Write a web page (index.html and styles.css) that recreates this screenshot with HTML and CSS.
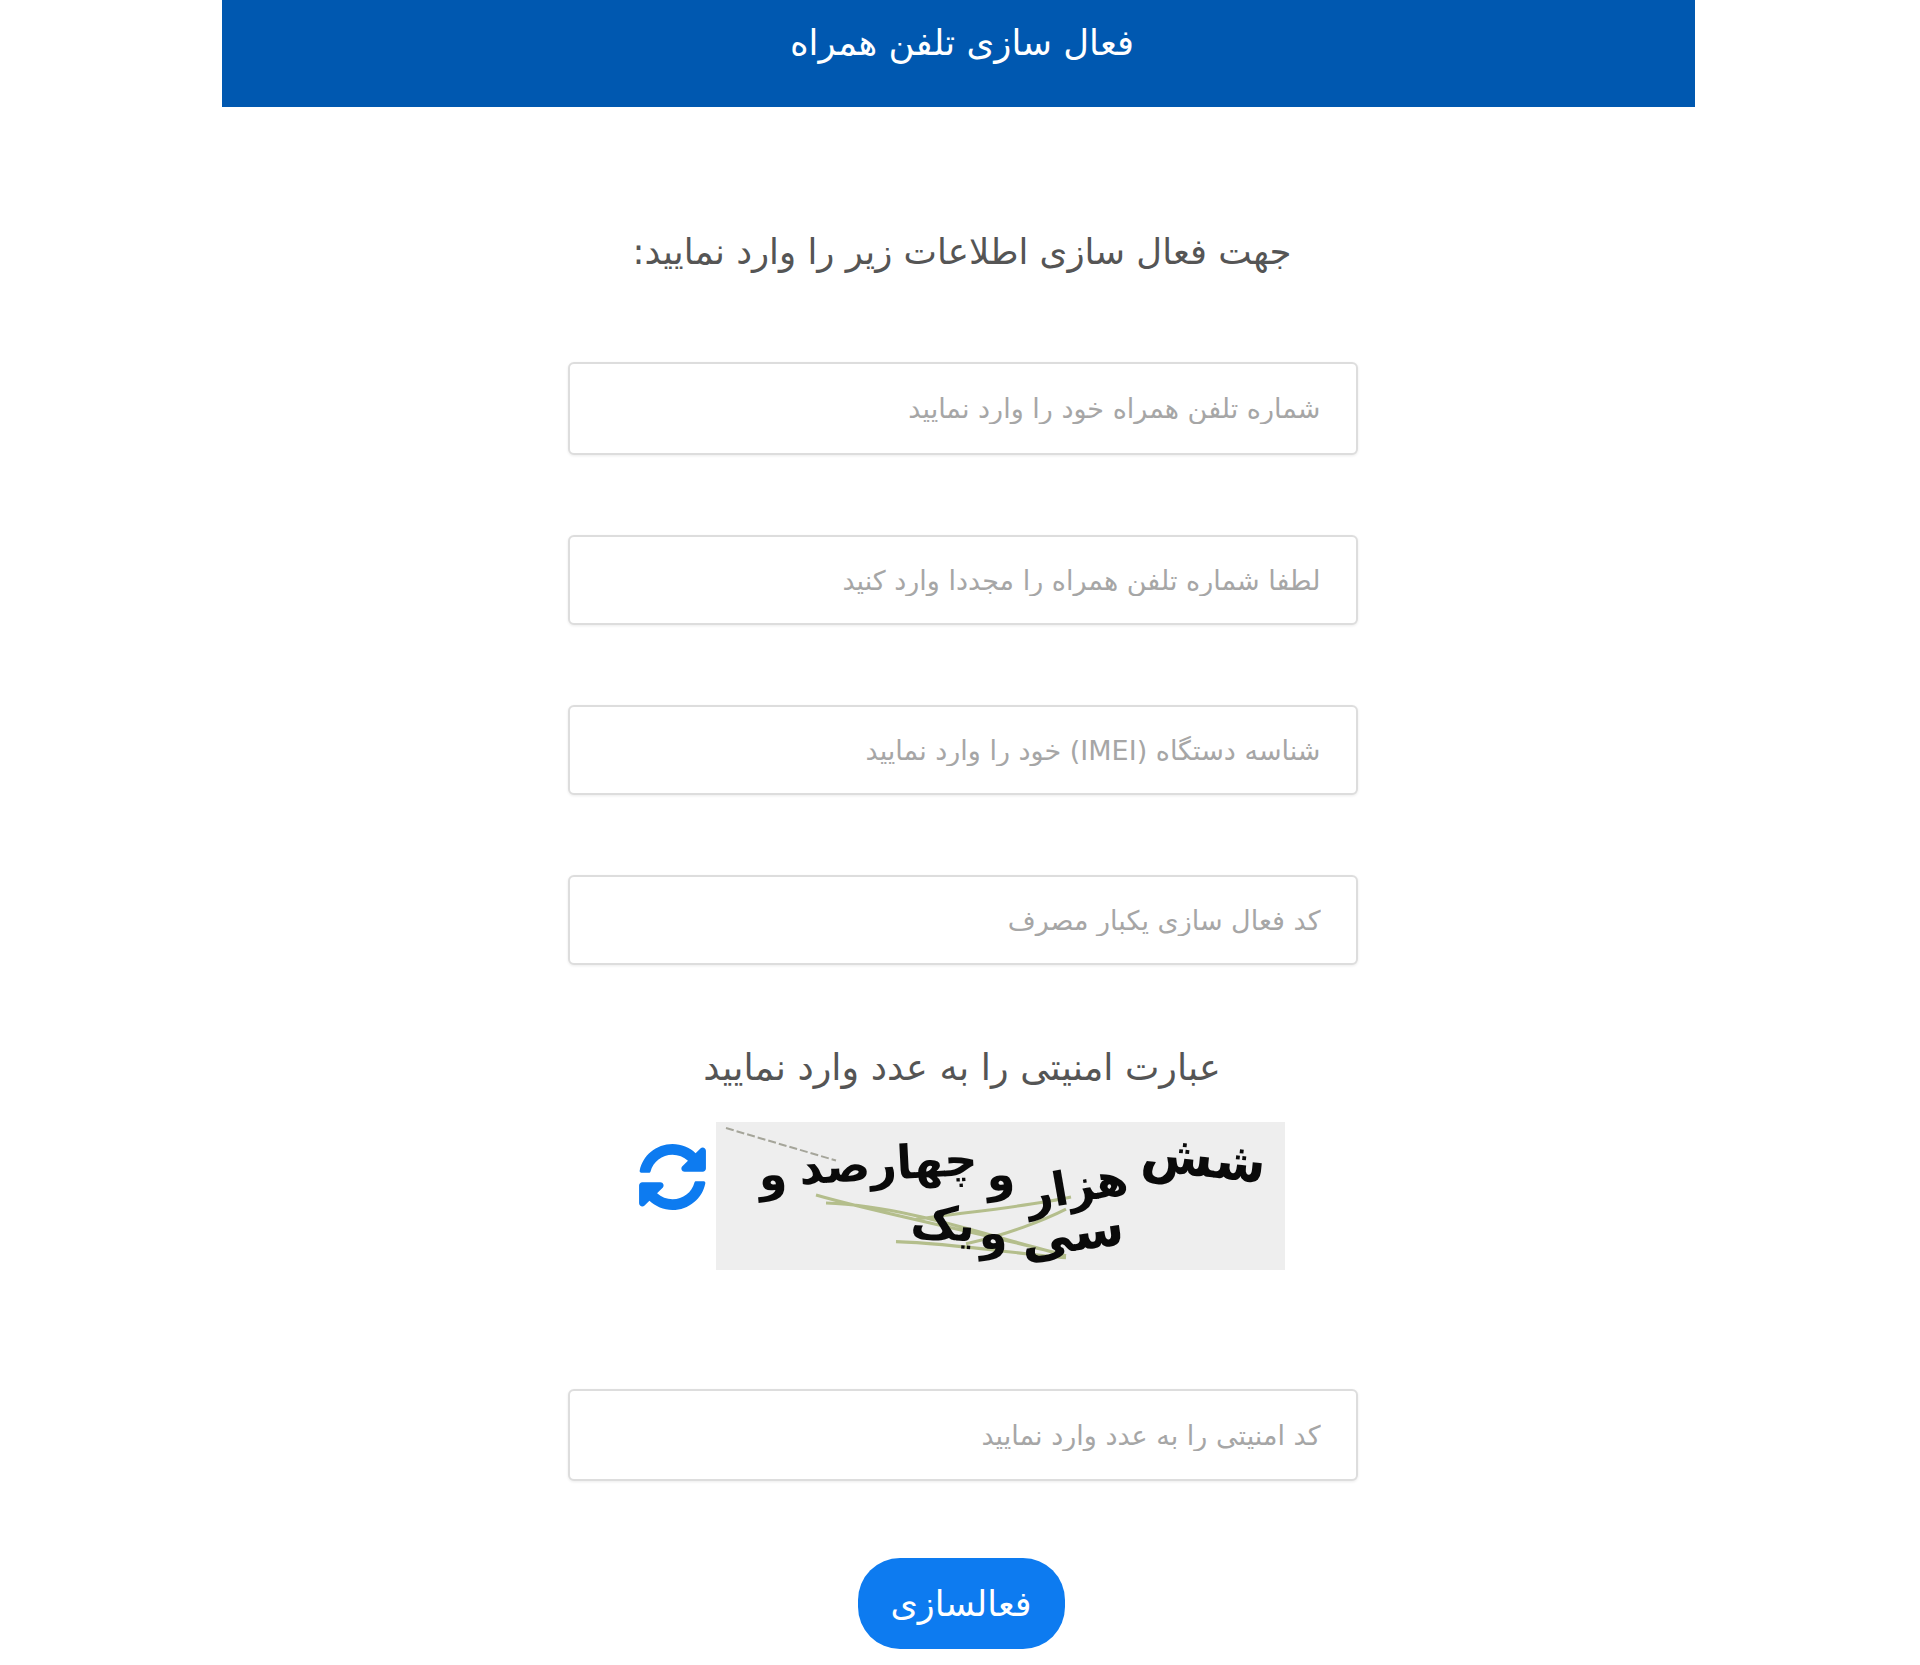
FILE: index.html
```html
<!DOCTYPE html>
<html lang="fa" dir="rtl">
<head>
<meta charset="utf-8">
<title>فعال سازی تلفن همراه</title>
<link rel="stylesheet" href="styles.css">
</head>
<body>
<main class="page">
  <header class="banner"><h1 class="banner-title">فعال سازی تلفن همراه</h1></header>
  <form class="form">
    <p class="intro">جهت فعال سازی اطلاعات زیر را وارد نمایید:</p>
    <input class="field field-first" type="text" placeholder="شماره تلفن همراه خود را وارد نمایید">
    <input class="field" type="text" placeholder="لطفا شماره تلفن همراه را مجددا وارد کنید">
    <input class="field" type="text" placeholder="شناسه دستگاه (IMEI) خود را وارد نمایید">
    <input class="field" type="text" placeholder="کد فعال سازی یکبار مصرف">
    <p class="captcha-label">عبارت امنیتی را به عدد وارد نمایید</p>
    <div class="captcha">
      <svg class="captcha-image" viewBox="0 0 569 146" preserveAspectRatio="none">
        <rect class="captcha-bg" width="569" height="146"/>
        <path class="noise-thin" d="M10 6 L120 38"/>
        <path class="noise" d="M100 72 C170 92 280 112 350 132 M110 80 C190 82 290 118 345 130 M180 118 C240 120 300 130 350 134 M200 96 C260 88 320 82 355 74 M250 120 C290 112 330 96 350 86"/>
        <text class="captcha-word captcha-large" transform="translate(548 60) rotate(6)">شش</text>
        <text class="captcha-word" transform="translate(414 70) rotate(-10)">هزار</text>
        <text class="captcha-word" transform="translate(300 66) rotate(-6)">و</text>
        <text class="captcha-word" transform="translate(262 52) rotate(-3)">چهارصد</text>
        <text class="captcha-word" transform="translate(72 66) rotate(-5)">و</text>
        <text class="captcha-word captcha-large" transform="translate(410 120) rotate(-8)">سی</text>
        <text class="captcha-word" transform="translate(292 124) rotate(-5)">و</text>
        <text class="captcha-word" transform="translate(258 118) rotate(4)">یک</text>
      </svg>
      <svg class="refresh" viewBox="0 0 512 512" preserveAspectRatio="none">
        <path d="M370.72 133.28C339.458 104.008 298.888 87.962 255.848 88c-77.458.068-144.328 53.178-162.791 126.85-1.344 5.363-6.122 9.15-11.651 9.15H24.103c-7.498 0-13.194-6.807-11.807-14.176C33.933 94.924 134.813 8 256 8c66.448 0 126.791 26.136 171.315 68.685L463.03 40.97C478.149 25.851 504 36.559 504 57.941V192c0 13.255-10.745 24-24 24H345.941c-21.382 0-32.09-25.851-16.971-40.971l41.75-41.749zM32 296h134.059c21.382 0 32.09 25.851 16.971 40.971l-41.75 41.75c31.262 29.273 71.835 45.319 114.876 45.28 77.418-.07 144.315-53.144 162.787-126.849 1.344-5.363 6.122-9.15 11.651-9.15h57.304c7.498 0 13.194 6.807 11.807 14.176C478.067 417.076 377.187 504 256 504c-66.448 0-126.791-26.136-171.315-68.685L48.97 471.03C33.851 486.149 8 475.441 8 454.059V320c0-13.255 10.745-24 24-24z"/>
      </svg>
    </div>
    <input class="field field-code" type="text" placeholder="کد امنیتی را به عدد وارد نمایید">
    <button class="submit" type="button">فعالسازی</button>
  </form>
</main>
</body>
</html>
```
FILE: styles.css
```css
* { box-sizing: border-box; }
html, body { margin: 0; padding: 0; background: #fff; }
body { font-family: "DejaVu Sans", "Noto Sans", sans-serif; height: 1665px; overflow: hidden; }
.page { margin: 0 225px 0 222px; }
.banner { height: 107px; background: #0058b0; display: flex; justify-content: center; padding: 22px 0 0 7px; }
.banner-title { margin: 0; color: #fff; font-size: 35.5px; font-weight: 400; line-height: 42px; }
.form { display: flex; flex-direction: column; align-items: center; padding-left: 7px; }
.intro { margin: 122px 0 0; height: 46px; color: #555; font-size: 35.5px; line-height: 46px; }
.field { display: block; width: 790px; height: 90px; margin: 80px 0 0 1px; padding: 0 35px; border: 2px solid #ddd; border-radius: 6px; background: #fff; font: 400 27px "DejaVu Sans", sans-serif; color: #555; text-align: right; box-shadow: 0 1px 3px rgba(0,0,0,.08); }
.field::placeholder { color: #a6a6a6; opacity: 1; }
.field-first { height: 93px; margin-top: 87px; }
.captcha-label { margin: 80px 0 0; height: 46px; color: #555; font-size: 36.5px; line-height: 46px; }
.captcha { display: flex; gap: 9px; margin: 31px 2px 0 0; height: 148px; }
.captcha-image { display: block; width: 569px; height: 148px; filter: blur(.5px); }
.captcha-bg { fill: #eeeeee; }
.noise-thin { stroke: #a5a59a; stroke-width: 2; stroke-dasharray: 8 3; fill: none; }
.noise { stroke: #b4be8c; stroke-width: 3; fill: none; }
.captcha-word { font-family: "DejaVu Sans", sans-serif; font-weight: 700; font-size: 46px; fill: #0a0a0a; direction: rtl; }
.captcha-large { font-size: 52px; }
.refresh { display: block; width: 69px; height: 68px; margin-top: 21px; fill: #0d7bf0; }
.field-code { height: 92px; margin-top: 119px; }
.submit { margin: 77px 2px 0 0; width: 207px; height: 91px; border: 0; border-radius: 42px; background: #0d7bf0; color: #fff; font: 400 35px "DejaVu Sans", sans-serif; }
```
